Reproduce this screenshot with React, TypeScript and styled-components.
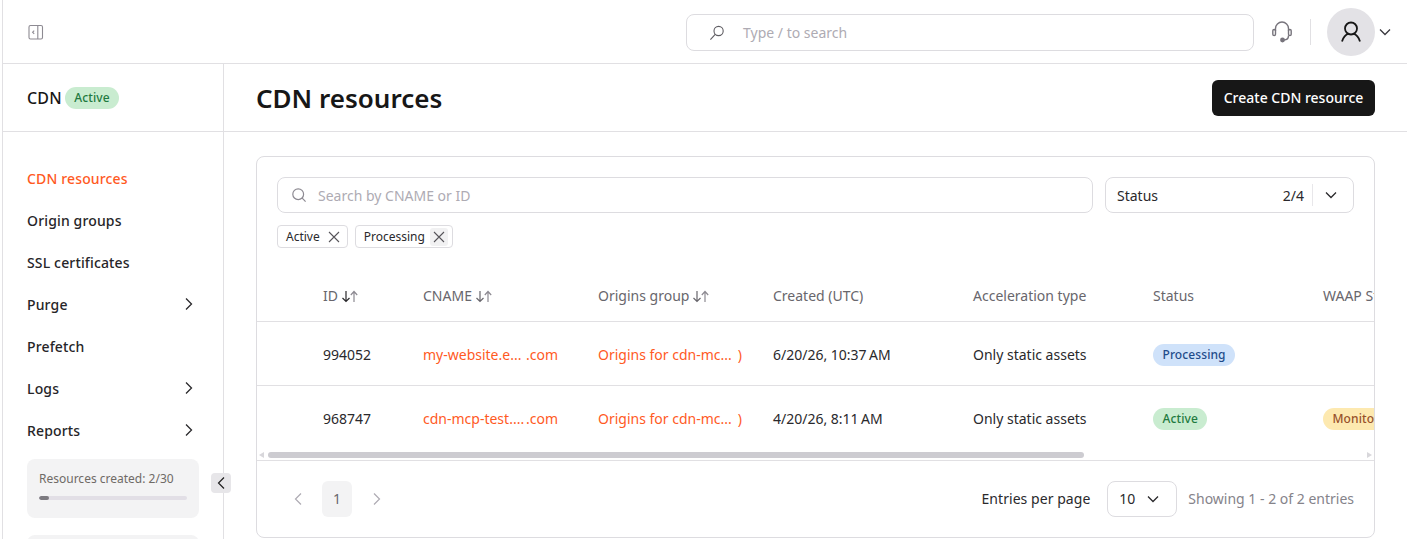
import React from "react";
import styled, { createGlobalStyle } from "styled-components";

const GlobalStyle = createGlobalStyle`
  html, body {
    margin: 0;
    padding: 0;
    background: #fff;
    font-family: "Noto Sans", "Liberation Sans", sans-serif;
    color: #1f1f1f;
    overflow: hidden;
  }
  * { box-sizing: border-box; }
`;

const Page = styled.div`
  width: 1407px;
  height: 539px;
  overflow: hidden;
  padding-left: 2px;
`;
const Shell = styled.div`
  height: 100%;
  border-left: 1px solid #e1e0e3;
  display: flex;
  flex-direction: column;
`;
const TopBar = styled.header`
  height: 64px;
  flex: none;
  border-bottom: 1px solid #e1e0e3;
  display: flex;
  align-items: center;
  padding: 0 15px 0 25px;
`;
const IconSlot = styled.span`
  display: flex;
  color: #8d8a92;
`;
const GlobalSearch = styled.div`
  width: 568px;
  height: 37px;
  margin: 2px 0 0 auto;
  border: 1px solid #dddce0;
  border-radius: 8px;
  display: flex;
  align-items: center;
  gap: 18px;
  padding-left: 22px;
  color: #aeabb3;
  font-size: 14px;
`;
const HeadsetSlot = styled.span`
  display: flex;
  margin-left: 17px;
  color: #77747c;
`;
const VerticalRule = styled.span`
  width: 1px;
  height: 26px;
  background: #e1e0e3;
  margin: 0 16px 0 17px;
`;
const Avatar = styled.span`
  width: 48px;
  height: 48px;
  border-radius: 50%;
  background: #e3e2e6;
  display: flex;
  align-items: center;
  justify-content: center;
`;
const AvatarCaret = styled.span`
  display: flex;
  margin-left: 3px;
  color: #3a383e;
`;

const Body = styled.div`
  flex: 1;
  display: flex;
  min-height: 0;
`;
const Sidebar = styled.aside`
  width: 221px;
  flex: none;
  border-right: 1px solid #e1e0e3;
  position: relative;
`;
const ProductTitle = styled.div`
  height: 68px;
  border-bottom: 1px solid #e1e0e3;
  display: flex;
  align-items: center;
  gap: 3px;
  padding-left: 24px;
  font-size: 16px;
  font-weight: 500;
  letter-spacing: 0.15px;
  color: #171717;
`;
const Nav = styled.nav`
  padding: 25px 24px 0;
`;
const NavItem = styled.div<{ $active?: boolean }>`
  height: 42px;
  display: flex;
  align-items: center;
  justify-content: space-between;
  padding-right: 3px;
  font-size: 14px;
  font-weight: 500;
  letter-spacing: 0.15px;
  color: ${(p) => (p.$active ? "#ff5a1f" : "#262528")};
`;
const QuotaCard = styled.div`
  width: 172px;
  height: 59px;
  margin-top: 8px;
  border-radius: 8px;
  background: #f3f3f4;
  padding: 11px 12px 0;
  font-size: 12px;
  color: #6f6a66;
  & + & { margin-top: 17px; }
`;
const QuotaTrack = styled.div`
  height: 4px;
  margin-top: 9px;
  border-radius: 2px;
  background: #e2dfe6;
  overflow: hidden;
`;
const QuotaFill = styled.div`
  height: 100%;
  border-radius: 2px;
  background: #7c7a80;
`;
const CollapseButton = styled.button`
  position: absolute;
  right: -8px;
  top: 409px;
  width: 20px;
  height: 20px;
  padding: 0;
  border: 0;
  border-radius: 4px;
  background: #e7e6e9;
  color: #1f1f1f;
  display: flex;
  align-items: center;
  justify-content: center;
`;

const Main = styled.main`
  flex: 1;
  min-width: 0;
`;
const PageHeader = styled.div`
  height: 68px;
  border-bottom: 1px solid #e1e0e3;
  display: flex;
  align-items: center;
  justify-content: space-between;
  padding: 0 32px;
`;
const PageTitle = styled.h1`
  margin: 0;
  font-size: 26px;
  line-height: 36px;
  font-weight: 600;
  color: #171717;
`;
const PrimaryButton = styled.button`
  height: 36px;
  width: 163px;
  border: 0;
  border-radius: 6px;
  background: #171717;
  color: #fff;
  font: 500 14px "Noto Sans", sans-serif;
  padding: 0;
`;
const Card = styled.section`
  margin: 24px 32px 0;
  height: 382px;
  border: 1px solid #dddce0;
  border-radius: 8px;
  overflow: hidden;
`;
const FilterRow = styled.div`
  display: flex;
  gap: 12px;
  padding: 20px 20px 0;
`;
const SearchBox = styled.div`
  flex: 1;
  height: 36px;
  border: 1px solid #dddce0;
  border-radius: 8px;
  display: flex;
  align-items: center;
  gap: 11px;
  padding-left: 13px;
  font-size: 14px;
  color: #aeabb3;
`;
const StatusSelect = styled.div`
  width: 249px;
  height: 36px;
  border: 1px solid #dddce0;
  border-radius: 8px;
  display: flex;
  align-items: center;
  padding: 0 15px 0 11px;
  font-size: 14px;
  color: #2a292c;
`;
const StatusCount = styled.span`
  margin-left: auto;
`;
const SelectDivider = styled.span`
  width: 1px;
  height: 22px;
  background: #e8e7ea;
  margin: 0 11px 0 8px;
`;
const CaretSlot = styled.span`
  display: flex;
  color: #2a292c;
`;
const ChipRow = styled.div`
  display: flex;
  gap: 7px;
  padding: 12px 20px 0;
`;
const Chip = styled.div`
  height: 23px;
  border: 1px solid #dddce0;
  border-radius: 4px;
  display: flex;
  align-items: center;
  gap: 5px;
  padding: 0 4px 0 8px;
  font-size: 12px;
  color: #2a292c;
`;
const ChipClose = styled.span<{ $hover?: boolean }>`
  width: 18px;
  height: 18px;
  border-radius: 3px;
  display: flex;
  align-items: center;
  justify-content: center;
  background: ${(p) => (p.$hover ? "#f1f1f2" : "transparent")};
  color: #57555a;
`;
const TableViewport = styled.div`
  margin-top: 23px;
  height: 179px;
  overflow: hidden;
`;
const Table = styled.table`
  width: 1250px;
  table-layout: fixed;
  border-collapse: collapse;
`;
const HeadCell = styled.th`
  height: 50px;
  padding: 0 0 0 16px;
  text-align: left;
  font-size: 14px;
  font-weight: 400;
  color: #68666c;
  white-space: nowrap;
  border-bottom: 1px solid #e1e0e3;
`;
const Row = styled.tr`
  & + & td { border-top: 1px solid #e1e0e3; }
`;
const Cell = styled.td`
  height: 64px;
  padding: 3px 0 0 16px;
  font-size: 14px;
  color: #2a292c;
  white-space: nowrap;
`;
const TruncatedLink = styled.span<{ $width: number }>`
  display: inline-flex;
  justify-content: space-between;
  width: ${(p) => p.$width}px;
  color: #ff5a1f;
`;
const SortArrows = styled.span`
  display: inline-flex;
  vertical-align: -2px;
  margin-left: 3px;
`;
const Badge = styled.span<{ $bg: string; $fg: string }>`
  display: inline-block;
  height: 22px;
  line-height: 21px;
  padding: 0 9.5px;
  border-radius: 11px;
  font-size: 12px;
  font-weight: 500;
  letter-spacing: 0.1px;
  background: ${(p) => p.$bg};
  color: ${(p) => p.$fg};
`;
const ScrollBar = styled.div`
  height: 10px;
  display: flex;
  align-items: center;
  padding: 0 2px;
`;
const ScrollThumb = styled.div`
  width: 816px;
  height: 6px;
  margin-left: 4px;
  border-radius: 3px;
  background: #cdccd1;
`;
const ScrollArrow = styled.span<{ $dir: "left" | "right" }>`
  width: 0;
  height: 0;
  border-top: 3px solid transparent;
  border-bottom: 3px solid transparent;
  ${(p) =>
    p.$dir === "left"
      ? "border-right: 5px solid #d8d7db;"
      : "border-left: 5px solid #d8d7db; margin-left: auto;"}
`;
const Footer = styled.div`
  border-top: 1px solid #e1e0e3;
  height: 77px;
  display: flex;
  align-items: center;
  padding: 0 20px 0 35px;
  font-size: 14px;
  line-height: 18px;
`;
const PagerArrow = styled.span`
  display: flex;
  color: #aeabb3;
`;
const PageNumber = styled.span`
  width: 30px;
  height: 36px;
  margin: 0 19px 0 18px;
  border-radius: 6px;
  background: #f3f3f4;
  color: #68666c;
  display: flex;
  align-items: center;
  justify-content: center;
`;
const EntriesLabel = styled.span`
  margin-left: auto;
  color: #2a292c;
  letter-spacing: 0.05px;
`;
const PageSize = styled.div`
  width: 70px;
  height: 36px;
  margin: 0 11px 0 17px;
  border: 1px solid #dddce0;
  border-radius: 8px;
  display: flex;
  align-items: center;
  gap: 11px;
  padding-left: 11px;
  color: #2a292c;
`;
const ShowingText = styled.span`
  color: #85838a;
`;

const PanelIcon = () => (
  <svg width="16" height="16" viewBox="0 0 16 16" fill="none" stroke="currentColor" strokeWidth="1.1">
    <rect x="1" y="1.5" width="13.5" height="13.5" rx="1.5" />
    <path d="M9.800 1.5V15M6.200 6.600 4.600 8.200l1.600 1.600" />
  </svg>
);
const MirroredSearch = () => (
  <svg width="16" height="16" viewBox="0 0 16 16" fill="none" stroke="#5f5d63" strokeWidth="1.1">
    <circle cx="9.600" cy="6" r="4.600" />
    <path d="M6.200 9.400 1.400 14.600" />
  </svg>
);
const SearchIcon = () => (
  <svg width="16" height="16" viewBox="0 0 16 16" fill="none" stroke="#8d8a92" strokeWidth="1.2">
    <circle cx="7.200" cy="7.200" r="5.400" />
    <path d="m11.200 11.200 3.400 3.400" />
  </svg>
);
const HeadsetIcon = () => (
  <svg width="22" height="24" viewBox="0 0 22 24" fill="none" stroke="currentColor" strokeWidth="1.4">
    <path d="M4.500 11V8.500a6.500 6.500 0 0 1 13 0V11" />
    <rect x="1.800" y="9.500" width="2.700" height="6" rx="1.300" />
    <rect x="17.500" y="9.500" width="2.700" height="6" rx="1.300" />
    <path d="M17.500 15.500c0 3-2 4.500-4.500 4.500" />
    <circle cx="11.500" cy="20" r="1.700" fill="currentColor" />
  </svg>
);
const UserIcon = () => (
  <svg width="24" height="24" viewBox="0 0 24 24" fill="none" stroke="#171717" strokeWidth="1.8">
    <circle cx="12" cy="8.500" r="6" />
    <path d="M3 21.500c1-4 4-7 6-7.600M21 21.500c-1-4-4-7-6-7.600" />
  </svg>
);
const Caret = ({ size = 14 }: { size?: number }) => (
  <svg width={size} height={size} viewBox="0 0 14 14" fill="none" stroke="currentColor" strokeWidth="1.3">
    <path d="m2 4.500 5 5 5-5" />
  </svg>
);
const ChevronRight = () => (
  <svg width="14" height="14" viewBox="0 0 14 14" fill="none" stroke="#2a292c" strokeWidth="1.3">
    <path d="m4 1.500 5.500 5.500L4 12.500" />
  </svg>
);
const PagerChevron = ({ left }: { left?: boolean }) => (
  <svg width="12" height="14" viewBox="0 0 12 14" fill="none" stroke="currentColor" strokeWidth="1.2">
    <path d={left ? "M9 1.500 3.500 7 9 12.500" : "M3 1.500 8.500 7 3 12.500"} />
  </svg>
);
const CloseIcon = () => (
  <svg width="12" height="12" viewBox="0 0 12 12" fill="none" stroke="currentColor" strokeWidth="1.1">
    <path d="m1 1 10 10M11 1 1 11" />
  </svg>
);
const SortIcon = ({ strong }: { strong?: boolean }) => (
  <svg width="18" height="13" viewBox="0 0 18 13" fill="none" strokeWidth="1.2">
    <path d="M5 1v10.500M1.500 8 5 11.500 8.500 8" stroke={strong ? "#2a292c" : "#68666c"} />
    <path d="M13 12V1.500M9.800 5 13 1.500 16.200 5" stroke="#8d8a92" />
  </svg>
);

const columns = [50, 100, 175, 175, 200, 180, 170, 200];

const navItems = [
  { label: "CDN resources", active: true },
  { label: "Origin groups" },
  { label: "SSL certificates" },
  { label: "Purge", expandable: true },
  { label: "Prefetch" },
  { label: "Logs", expandable: true },
  { label: "Reports", expandable: true },
];

const resources = [
  {
    id: "994052",
    cname: "my-website.e...",
    created: "6/20/26, 10:37\u202fAM",
    status: <Badge $bg="#cfe2fa" $fg="#1f4c8a">Processing</Badge>,
    waap: null,
  },
  {
    id: "968747",
    cname: "cdn-mcp-test....",
    created: "4/20/26, 8:11\u202fAM",
    status: <Badge $bg="#c9ecd0" $fg="#1f7a3f">Active</Badge>,
    waap: <Badge $bg="#fde9b0" $fg="#97512a">Monitor</Badge>,
  },
];

export default function App() {
  return (
    <Page>
      <GlobalStyle />
      <Shell>
        <TopBar>
          <IconSlot><PanelIcon /></IconSlot>
          <GlobalSearch>
            <MirroredSearch />
            Type / to search
          </GlobalSearch>
          <HeadsetSlot><HeadsetIcon /></HeadsetSlot>
          <VerticalRule />
          <Avatar><UserIcon /></Avatar>
          <AvatarCaret><Caret /></AvatarCaret>
        </TopBar>
        <Body>
          <Sidebar>
            <ProductTitle>
              CDN
              <Badge $bg="#c9ecd0" $fg="#1f7a3f">Active</Badge>
            </ProductTitle>
            <Nav>
              {navItems.map((item) => (
                <NavItem key={item.label} $active={item.active}>
                  {item.label}
                  {item.expandable && <ChevronRight />}
                </NavItem>
              ))}
              <QuotaCard>
                Resources created: 2/30
                <QuotaTrack>
                  <QuotaFill style={{ width: `${(2 / 30) * 100}%` }} />
                </QuotaTrack>
              </QuotaCard>
              <QuotaCard />
            </Nav>
            <CollapseButton aria-label="Collapse sidebar">
              <PagerChevron left />
            </CollapseButton>
          </Sidebar>
          <Main>
            <PageHeader>
              <PageTitle>CDN resources</PageTitle>
              <PrimaryButton>Create CDN resource</PrimaryButton>
            </PageHeader>
            <Card>
              <FilterRow>
                <SearchBox>
                  <SearchIcon />
                  Search by CNAME or ID
                </SearchBox>
                <StatusSelect>
                  Status
                  <StatusCount>2/4</StatusCount>
                  <SelectDivider />
                  <CaretSlot><Caret /></CaretSlot>
                </StatusSelect>
              </FilterRow>
              <ChipRow>
                <Chip>Active<ChipClose><CloseIcon /></ChipClose></Chip>
                <Chip>Processing<ChipClose $hover><CloseIcon /></ChipClose></Chip>
              </ChipRow>
              <TableViewport>
                <Table>
                  <colgroup>
                    {columns.map((w, i) => <col key={i} width={w} />)}
                  </colgroup>
                  <thead>
                    <tr>
                      <HeadCell />
                      <HeadCell>ID<SortArrows><SortIcon strong /></SortArrows></HeadCell>
                      <HeadCell>CNAME<SortArrows><SortIcon /></SortArrows></HeadCell>
                      <HeadCell>Origins group<SortArrows><SortIcon /></SortArrows></HeadCell>
                      <HeadCell>Created (UTC)</HeadCell>
                      <HeadCell>Acceleration type</HeadCell>
                      <HeadCell>Status</HeadCell>
                      <HeadCell>WAAP Status</HeadCell>
                    </tr>
                  </thead>
                  <tbody>
                    {resources.map((r) => (
                      <Row key={r.id}>
                        <Cell />
                        <Cell>{r.id}</Cell>
                        <Cell>
                          <TruncatedLink $width={135}>
                            <span>{r.cname}</span>
                            <span>.com</span>
                          </TruncatedLink>
                        </Cell>
                        <Cell>
                          <TruncatedLink $width={144}>
                            <span>Origins for cdn-mc...</span>
                            <span>)</span>
                          </TruncatedLink>
                        </Cell>
                        <Cell>{r.created}</Cell>
                        <Cell>Only static assets</Cell>
                        <Cell>{r.status}</Cell>
                        <Cell>{r.waap}</Cell>
                      </Row>
                    ))}
                  </tbody>
                </Table>
              </TableViewport>
              <ScrollBar>
                <ScrollArrow $dir="left" />
                <ScrollThumb />
                <ScrollArrow $dir="right" />
              </ScrollBar>
              <Footer>
                <PagerArrow><PagerChevron left /></PagerArrow>
                <PageNumber>1</PageNumber>
                <PagerArrow><PagerChevron /></PagerArrow>
                <EntriesLabel>Entries per page</EntriesLabel>
                <PageSize>10<CaretSlot><Caret /></CaretSlot></PageSize>
                <ShowingText>Showing 1 - 2 of 2 entries</ShowingText>
              </Footer>
            </Card>
          </Main>
        </Body>
      </Shell>
    </Page>
  );
}
